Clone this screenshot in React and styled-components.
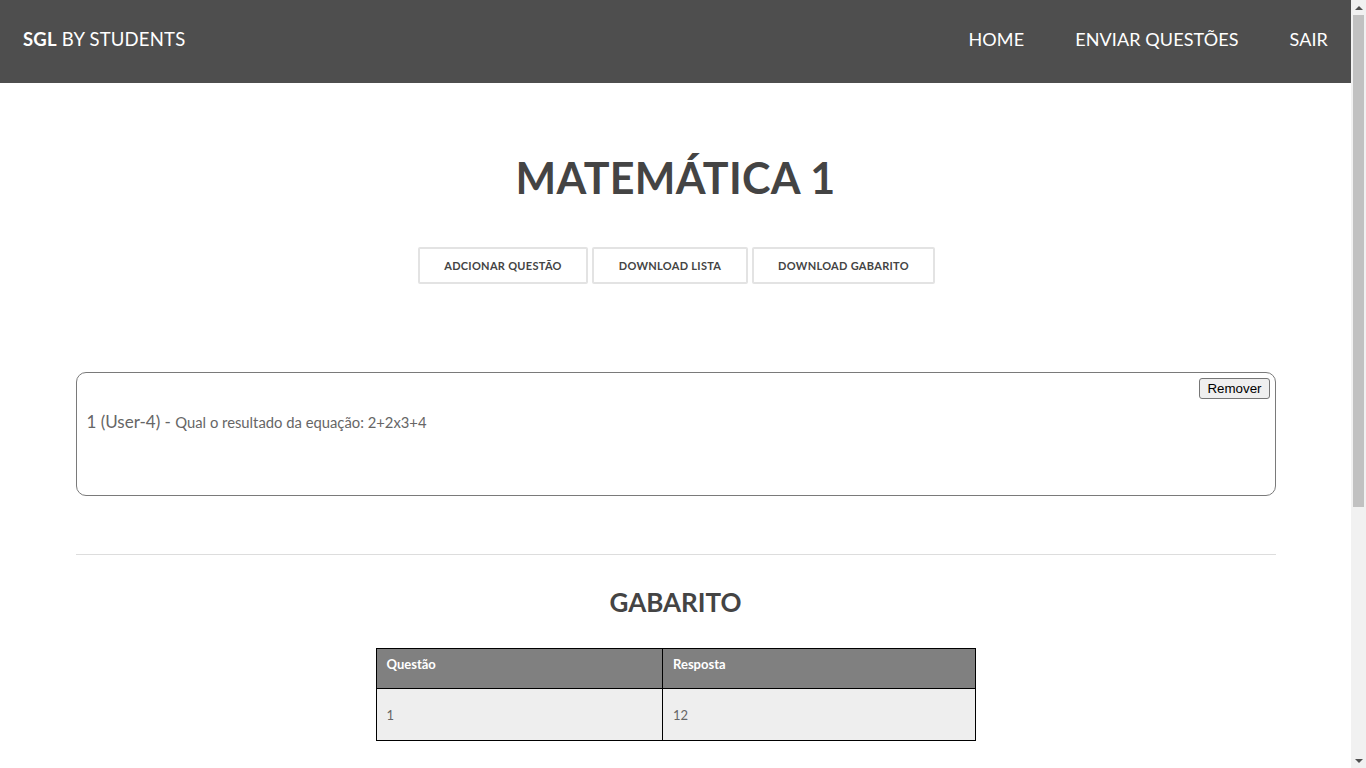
import React from "react";
import styled, { createGlobalStyle } from "styled-components";

const Global = createGlobalStyle`
  html, body { margin: 0; padding: 0; background: #fff; overflow: hidden; }
  body { font-family: "Lato", "Open Sans", sans-serif; color: #444; }
  * { box-sizing: border-box; }
`;

const Frame = styled.div`
  display: flex;
  height: 100vh;
  overflow: hidden;
`;

const Viewport = styled.div`
  flex: 1;
  min-width: 0;
  overflow: hidden;
`;

const ScrollBar = styled.div`
  width: 15px;
  flex: none;
  background: #f1f1f1;
  display: flex;
  flex-direction: column;
  align-items: center;
`;

const ArrowBox = styled.div`
  height: 15px;
  width: 15px;
  display: flex;
  align-items: center;
  justify-content: center;
  flex: none;
`;

const Arrow = styled.span`
  width: 0;
  height: 0;
  border-left: 4px solid transparent;
  border-right: 4px solid transparent;
  ${(p) =>
    p.$down
      ? "border-top: 4px solid #505050;"
      : "border-bottom: 4px solid #505050;"}
`;

const Track = styled.div`
  flex: 1;
  width: 100%;
  display: flex;
  justify-content: center;
`;

const Thumb = styled.div`
  width: 11px;
  height: 492px;
  background: #c1c1c1;
`;

const Nav = styled.nav`
  height: 83px;
  background: #4e4e4e;
  display: flex;
  align-items: center;
  justify-content: space-between;
  padding: 0 23px 5px;
  color: #fff;
`;

const Brand = styled.div`
  font-size: 18.5px;
  letter-spacing: 0.2px;
  b { font-weight: 700; }
`;

const Menu = styled.ul`
  list-style: none;
  margin: 0;
  padding: 0;
  display: flex;
  gap: 51px;
`;

const MenuItem = styled.li`
  font-size: 18px;
  letter-spacing: 0.1px;
`;

const Container = styled.main`
  max-width: 1200px;
  margin: 0 auto;
`;

const Title = styled.h1`
  margin: 65px 0 0;
  text-align: center;
  font-size: 43px;
  line-height: 60px;
  font-weight: 700;
  color: #444;
  letter-spacing: 0.3px;
`;

const ButtonRow = styled.div`
  display: flex;
  justify-content: center;
  gap: 4px;
  margin-top: 39px;
  padding-left: 2px;
`;

const ActionButton = styled.button`
  height: 37px;
  padding: 0 24px;
  background: #fff;
  border: 2px solid #e3e3e3;
  border-radius: 2px;
  font-family: inherit;
  font-size: 11px;
  font-weight: 700;
  color: #444;
  letter-spacing: 0.3px;
  min-width: ${(p) => p.$w}px;
`;

const Card = styled.section`
  margin-top: 88px;
  height: 124px;
  border: 1px solid #7a7a7a;
  border-radius: 10px;
  padding: 5px 5px 0 10px;
  display: flex;
  flex-direction: column;
`;

const CardHead = styled.div`
  display: flex;
  justify-content: flex-end;
`;

const RemoveButton = styled.button`
  height: 21px;
  padding: 0 7px;
  font-family: "Liberation Sans", Arial, sans-serif;
  font-size: 13.33px;
  color: #000;
  background: #efefef;
  border: 1px solid #767676;
  border-radius: 3px;
`;

const QuestionLine = styled.p`
  margin: 12px 0 0;
  color: #666;
  font-size: 14.8px;
`;

const QNum = styled.span`
  font-size: 17px;
`;

const Divider = styled.hr`
  margin: 58px 0 0;
  border: 0;
  border-top: 1px solid #ddd;
`;

const SubTitle = styled.h2`
  margin: 30px 0 0;
  text-align: center;
  font-size: 26px;
  line-height: 34px;
  font-weight: 700;
  color: #444;
`;

const Table = styled.table`
  margin: 29px auto 0;
  width: 600px;
  border-collapse: collapse;
  font-size: 13px;
`;

const Th = styled.th`
  background: #808080;
  color: #fff;
  text-align: left;
  font-weight: 700;
  height: 40px;
  padding: 0 10px 10px;
  border: 1px solid #000;
  width: ${(p) => p.$w}px;
`;

const Td = styled.td`
  background: #eee;
  color: #666;
  height: 52px;
  padding: 0 10px;
  border: 1px solid #000;
`;

export default function App() {
  return (
    <>
      <Global />
      <Frame>
        <Viewport>
          <Nav>
            <Brand>
              <b>SGL</b> BY STUDENTS
            </Brand>
            <Menu>
              <MenuItem>HOME</MenuItem>
              <MenuItem>ENVIAR QUESTÕES</MenuItem>
              <MenuItem>SAIR</MenuItem>
            </Menu>
          </Nav>
          <Container>
            <Title>MATEMÁTICA 1</Title>
            <ButtonRow>
              <ActionButton $w={170}>ADCIONAR QUESTÃO</ActionButton>
              <ActionButton $w={156}>DOWNLOAD LISTA</ActionButton>
              <ActionButton $w={183}>DOWNLOAD GABARITO</ActionButton>
            </ButtonRow>
            <Card>
              <CardHead>
                <RemoveButton>Remover</RemoveButton>
              </CardHead>
              <QuestionLine>
                <QNum>1 (User-4) - </QNum>Qual o resultado da equação: 2+2x3+4
              </QuestionLine>
            </Card>
            <Divider />
            <SubTitle>GABARITO</SubTitle>
            <Table>
              <thead>
                <tr>
                  <Th $w={287}>Questão</Th>
                  <Th $w={313}>Resposta</Th>
                </tr>
              </thead>
              <tbody>
                <tr>
                  <Td>1</Td>
                  <Td>12</Td>
                </tr>
              </tbody>
            </Table>
          </Container>
        </Viewport>
        <ScrollBar>
          <ArrowBox>
            <Arrow />
          </ArrowBox>
          <Track>
            <Thumb />
          </Track>
          <ArrowBox>
            <Arrow $down />
          </ArrowBox>
        </ScrollBar>
      </Frame>
    </>
  );
}
